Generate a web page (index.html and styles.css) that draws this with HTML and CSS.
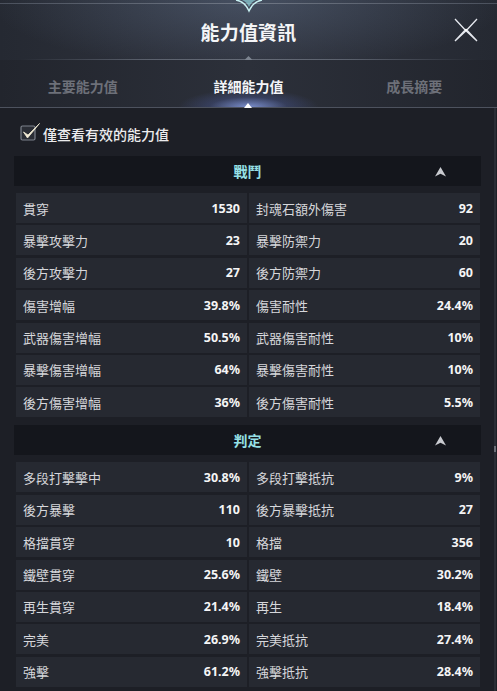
FILE: index.html
```html
<!DOCTYPE html>
<html lang="zh-Hant">
<head>
<meta charset="utf-8">
<title>能力值資訊</title>
<link rel="stylesheet" href="styles.css">
</head>
<body>
<div class="panel">
  <header class="header">
    <div class="topline"></div>
    <svg class="ornament" width="30" height="13" viewBox="0 0 30 13">
      <path d="M2 0 Q11 1.5 15 11 Q19 1.5 28 0" fill="none" stroke="#c9f2f4" stroke-width="1.4"/>
      <path d="M8 0 Q13 2 15 7 Q17 2 22 0 Z" fill="#8fd3da" opacity="0.7"/>
    </svg>
    <h1 class="title">能力值資訊</h1>
    <button class="close" aria-label="close">
      <svg width="24" height="24" viewBox="0 0 24 24">
        <path d="M1 1 L11.2 12 L12 12.8 L12.8 12 L23 1 L12.8 12 L23 23 L12 12.8 L1 23 L11.2 12 Z" fill="none" stroke="#e6e9ef" stroke-width="1.3" stroke-linecap="round"/>
        <circle cx="12" cy="12" r="1.3" fill="#ffffff"/>
      </svg>
    </button>
    <div class="sep"><span class="diamond"></span></div>
  </header>

  <nav class="tabs">
    <div class="tab">主要能力值</div>
    <div class="tab active">詳細能力值<span class="tab-mark"></span></div>
    <div class="tab">成長摘要</div>
  </nav>

  <main class="content">
    <label class="filter">
      <svg class="check" width="22" height="22" viewBox="0 0 22 22">
        <rect x="1" y="5" width="14" height="14" rx="1.5" fill="#2a2d35" stroke="#7d828c" stroke-width="1.2"/>
        <path d="M3.5 11 L7.5 17 L19.5 2.5 L8 14 Z" fill="#f3ecd6" stroke="#f3ecd6" stroke-width="0.8" stroke-linejoin="round"/>
      </svg>
      <span class="filter-text">僅查看有效的能力值</span>
    </label>

    <section class="group">
      <div class="group-head">
        <span class="group-title">戰鬥</span>
        <svg class="arrow" width="11" height="10" viewBox="0 0 11 10"><path d="M5.5 0 L11 9.5 L5.5 6.8 L0 9.5 Z" fill="#c9cbd0"/></svg>
      </div>
      <div class="grid">
        <div class="cell"><span class="label">貫穿</span><span class="value">1530</span></div>
        <div class="cell"><span class="label">封魂石額外傷害</span><span class="value">92</span></div>
        <div class="cell"><span class="label">暴擊攻擊力</span><span class="value">23</span></div>
        <div class="cell"><span class="label">暴擊防禦力</span><span class="value">20</span></div>
        <div class="cell"><span class="label">後方攻擊力</span><span class="value">27</span></div>
        <div class="cell"><span class="label">後方防禦力</span><span class="value">60</span></div>
        <div class="cell"><span class="label">傷害增幅</span><span class="value">39.8%</span></div>
        <div class="cell"><span class="label">傷害耐性</span><span class="value">24.4%</span></div>
        <div class="cell"><span class="label">武器傷害增幅</span><span class="value">50.5%</span></div>
        <div class="cell"><span class="label">武器傷害耐性</span><span class="value">10%</span></div>
        <div class="cell"><span class="label">暴擊傷害增幅</span><span class="value">64%</span></div>
        <div class="cell"><span class="label">暴擊傷害耐性</span><span class="value">10%</span></div>
        <div class="cell"><span class="label">後方傷害增幅</span><span class="value">36%</span></div>
        <div class="cell"><span class="label">後方傷害耐性</span><span class="value">5.5%</span></div>
      </div>
    </section>

    <section class="group group-second">
      <div class="group-head">
        <span class="group-title">判定</span>
        <svg class="arrow" width="11" height="10" viewBox="0 0 11 10"><path d="M5.5 0 L11 9.5 L5.5 6.8 L0 9.5 Z" fill="#c9cbd0"/></svg>
      </div>
      <div class="grid">
        <div class="cell"><span class="label">多段打擊擊中</span><span class="value">30.8%</span></div>
        <div class="cell"><span class="label">多段打擊抵抗</span><span class="value">9%</span></div>
        <div class="cell"><span class="label">後方暴擊</span><span class="value">110</span></div>
        <div class="cell"><span class="label">後方暴擊抵抗</span><span class="value">27</span></div>
        <div class="cell"><span class="label">格擋貫穿</span><span class="value">10</span></div>
        <div class="cell"><span class="label">格擋</span><span class="value">356</span></div>
        <div class="cell"><span class="label">鐵壁貫穿</span><span class="value">25.6%</span></div>
        <div class="cell"><span class="label">鐵壁</span><span class="value">30.2%</span></div>
        <div class="cell"><span class="label">再生貫穿</span><span class="value">21.4%</span></div>
        <div class="cell"><span class="label">再生</span><span class="value">18.4%</span></div>
        <div class="cell"><span class="label">完美</span><span class="value">26.9%</span></div>
        <div class="cell"><span class="label">完美抵抗</span><span class="value">27.4%</span></div>
        <div class="cell"><span class="label">強擊</span><span class="value">61.2%</span></div>
        <div class="cell"><span class="label">強擊抵抗</span><span class="value">28.4%</span></div>
      </div>
    </section>
    <div class="scrollbar"><span class="thumb"></span></div>
  </main>
</div>
</body>
</html>
```

FILE: styles.css
```css
* { box-sizing: border-box; }

html, body {
  margin: 0;
  padding: 0;
  background: #1d1f26;
}

body {
  width: 497px;
  height: 691px;
  overflow: hidden;
  font-family: "Noto Sans", "Noto Sans CJK TC", sans-serif;
  color: #e8e8ea;
}

.panel {
  width: 497px;
  height: 691px;
  display: flex;
  flex-direction: column;
  background: #1d1f26;
}

/* ---------- header ---------- */
.header {
  position: relative;
  height: 60px;
  padding-top: 5px;
  display: flex;
  align-items: center;
  justify-content: center;
  background:
    radial-gradient(ellipse 260px 70px at 50% 0%, rgba(110, 130, 160, 0.35), rgba(110, 130, 160, 0) 100%),
    linear-gradient(90deg, #252932 0%, #30343f 50%, #252932 100%);
}

.topline {
  position: absolute;
  left: 0;
  right: 0;
  top: 3px;
  height: 1px;
  background: linear-gradient(90deg, #4b515d 0%, #6f7785 50%, #4b515d 100%);
}

.ornament {
  position: absolute;
  top: 0;
  left: 234px;
}

.title {
  margin: 0;
  font-size: 19px;
  font-weight: 700;
  line-height: 26px;
  color: #f4f5f7;
  letter-spacing: 0.2px;
}

.close {
  position: absolute;
  right: 19px;
  top: 18px;
  width: 24px;
  height: 24px;
  padding: 0;
  border: 0;
  background: transparent;
}

.close svg { display: block; }

.sep {
  position: absolute;
  left: 0;
  right: 0;
  bottom: 0;
  height: 1px;
  background: linear-gradient(90deg, rgba(90, 96, 108, 0) 4%, #5b616d 30%, #666c78 50%, #5b616d 70%, rgba(90, 96, 108, 0) 96%);
}

.diamond {
  position: absolute;
  left: 246px;
  top: -2px;
  width: 5px;
  height: 5px;
  background: #7d8490;
  transform: rotate(45deg);
}

/* ---------- tabs ---------- */
.tabs {
  position: relative;
  height: 48px;
  padding-top: 5px;
  display: grid;
  grid-template-columns: 1fr 1fr 1fr;
  border-bottom: 1px solid #4d525e;
  background:
    radial-gradient(ellipse 70px 18px at 50% 100%, rgba(150, 175, 255, 0.75), rgba(90, 110, 200, 0.25) 55%, rgba(90, 110, 200, 0) 100%),
    linear-gradient(90deg, #22252d 0%, #2c303a 50%, #22252d 100%);
}

.tab {
  position: relative;
  display: flex;
  align-items: center;
  justify-content: center;
  font-size: 14px;
  font-weight: 700;
  color: #6d7079;
}

.tab.active { color: #f4f5f8; }

.tab-mark {
  position: absolute;
  left: 50%;
  bottom: -1px;
  margin-left: -4px;
  width: 0;
  height: 0;
  border-left: 4px solid transparent;
  border-right: 4px solid transparent;
  border-bottom: 5px solid #ffffff;
}

/* ---------- content ---------- */
.content {
  position: relative;
  flex: 1;
  padding: 12px 0 0 14px;
  background: #1d1f26;
}

.filter {
  height: 28px;
  padding-left: 6px;
  display: flex;
  align-items: center;
  gap: 1px;
}

.check {
  display: block;
  margin-top: -4px;
}

.filter-text {
  font-size: 14px;
  font-weight: 500;
  color: #ececee;
}

.group {
  width: 467px;
  margin-top: 8px;
}

.group-second { margin-top: 8px; }

.group-head {
  position: relative;
  height: 30px;
  display: flex;
  align-items: center;
  justify-content: center;
  background: #14161c;
}

.group-title {
  font-size: 14px;
  font-weight: 700;
  color: #96e0e6;
}

.arrow {
  position: absolute;
  right: 35px;
  top: 11px;
}

.grid {
  margin-top: 7px;
  padding: 0 1px 0 2px;
  display: grid;
  grid-template-columns: 1fr 1fr;
  column-gap: 2px;
  row-gap: 2.4px;
}

.cell {
  height: 30px;
  padding: 0 7px 0 7px;
  display: flex;
  align-items: center;
  justify-content: space-between;
  background: #262931;
}

.label {
  font-size: 13px;
  color: #d6d7db;
}

.value {
  font-size: 12.5px;
  font-weight: 700;
  color: #f5f5f6;
}

.scrollbar {
  position: absolute;
  right: 1px;
  top: 0;
  bottom: 0;
  width: 2px;
  background: #2a2d35;
}

.thumb {
  position: absolute;
  left: 0;
  top: 338px;
  width: 2px;
  height: 6px;
  background: #6a6e77;
}
```
